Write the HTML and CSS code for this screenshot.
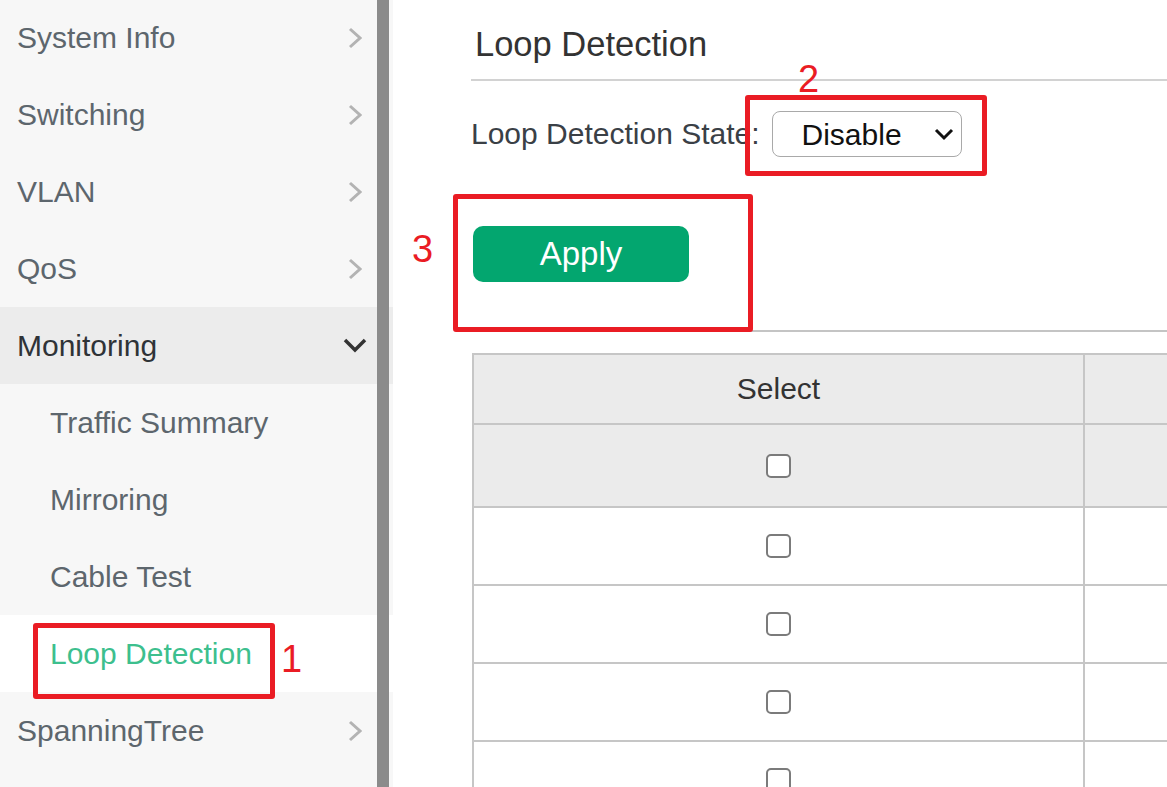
FILE: index.html
```html
<!DOCTYPE html>
<html lang="en">
<head>
    <meta charset="UTF-8">
    <meta name="viewport" content="width=device-width, initial-scale=1.0">
    <title>Loop Detection</title>
    <link rel="stylesheet" href="styles.css">
</head>
<body>
    <aside class="sidebar">
        <ul class="menu">
            <li class="menu-item">System Info
                <span class="menu-icon"><svg width="14" height="22" viewBox="0 0 14 22"><polyline points="2,2 12,11 2,20" /></svg></span>
            </li>
            <li class="menu-item">Switching
                <span class="menu-icon"><svg width="14" height="22" viewBox="0 0 14 22"><polyline points="2,2 12,11 2,20" /></svg></span>
            </li>
            <li class="menu-item">VLAN
                <span class="menu-icon"><svg width="14" height="22" viewBox="0 0 14 22"><polyline points="2,2 12,11 2,20" /></svg></span>
            </li>
            <li class="menu-item">QoS
                <span class="menu-icon"><svg width="14" height="22" viewBox="0 0 14 22"><polyline points="2,2 12,11 2,20" /></svg></span>
            </li>
            <li class="menu-item open">Monitoring
                <span class="menu-icon"><svg width="24" height="15" viewBox="0 0 24 15"><polyline points="2,2 12,12 22,2" /></svg></span>
            </li>
            <li class="menu-item sub">Traffic Summary</li>
            <li class="menu-item sub">Mirroring</li>
            <li class="menu-item sub">Cable Test</li>
            <li class="menu-item sub active">Loop Detection</li>
            <li class="menu-item">SpanningTree
                <span class="menu-icon"><svg width="14" height="22" viewBox="0 0 14 22"><polyline points="2,2 12,11 2,20" /></svg></span>
            </li>
        </ul>
        <div class="scrollbar"></div>
    </aside>

    <main class="content">
        <h1 class="page-title">Loop Detection</h1>

        <div class="form-row">
            <label for="ldState">Loop Detection State:</label>
            <div class="select-wrap">
                <select id="ldState">
                    <option>Disable</option>
                    <option>Enable</option>
                </select>
                <svg class="select-arrow" width="20" height="13" viewBox="0 0 20 13"><polyline points="2,2 10,10 18,2" /></svg>
            </div>
        </div>

        <div class="actions">
            <button class="btn-apply">Apply</button>
        </div>

        <table class="port-table">
            <thead>
                <tr>
                    <th class="col-select">Select</th>
                    <th></th>
                </tr>
            </thead>
            <tbody>
                <tr class="hl"><td class="col-select"><input type="checkbox"></td><td></td></tr>
                <tr><td class="col-select"><input type="checkbox"></td><td></td></tr>
                <tr><td class="col-select"><input type="checkbox"></td><td></td></tr>
                <tr><td class="col-select"><input type="checkbox"></td><td></td></tr>
                <tr><td class="col-select"><input type="checkbox"></td><td></td></tr>
            </tbody>
        </table>
    </main>

    <!-- annotation marks drawn over the screenshot -->
    <div class="mark mark-1"></div>
    <span class="mark-num num-1">1</span>
    <div class="mark mark-2"></div>
    <span class="mark-num num-2">2</span>
    <div class="mark mark-3"></div>
    <span class="mark-num num-3">3</span>
</body>
</html>
```

FILE: styles.css
```css
body {
    margin: 0;
    font-family: "Liberation Sans", Arial, sans-serif;
    display: flex;
    height: 100vh;
    overflow: hidden;
    background: #fff;
    position: relative;
}

/* sidebar */
.sidebar {
    width: 393px;
    flex-shrink: 0;
    background: #f7f7f7;
    position: relative;
}
.menu {
    list-style: none;
    margin: -1px 0 0 0;
    padding: 0;
}
.menu-item {
    height: 77px;
    display: flex;
    align-items: center;
    justify-content: space-between;
    padding: 0 26px 0 17px;
    font-size: 30px;
    color: #5d666d;
}
.menu-item.open {
    background: #ececec;
    color: #2f3337;
}
.menu-item.sub {
    padding-left: 50px;
}
.menu-item.active {
    background: #fff;
    color: #3dbf8e;
}
.menu-icon {
    width: 24px;
    display: flex;
    justify-content: center;
}
.menu-icon svg polyline {
    fill: none;
    stroke: #b3b3b3;
    stroke-width: 3;
}
.menu-item.open .menu-icon svg polyline {
    stroke: #333;
    stroke-width: 3.5;
}
.scrollbar {
    position: absolute;
    top: 0;
    bottom: 0;
    right: 4px;
    width: 12px;
    background: #8b8b8b;
}

/* main panel */
.content {
    flex: 1;
    min-width: 0;
    overflow: hidden;
    padding-left: 78px;
}
.page-title {
    margin: 0;
    padding: 20px 0 11px 4px;
    line-height: 48px;
    font-size: 34.5px;
    font-weight: normal;
    color: #333;
    border-bottom: 2px solid #d2d2d2;
}
.form-row {
    display: flex;
    align-items: center;
    gap: 12px;
    margin-top: 30px;
    height: 46px;
}
.form-row label {
    font-size: 30px;
    color: #3a4046;
}
.select-wrap {
    position: relative;
}
.select-wrap select {
    appearance: none;
    width: 190px;
    height: 46px;
    padding: 0 0 0 29px;
    font-family: inherit;
    font-size: 30px;
    color: #111;
    background: #fff;
    border: 1.5px solid #a9a9a9;
    border-radius: 8px;
}
.select-arrow {
    position: absolute;
    right: 8px;
    top: 17px;
    pointer-events: none;
}
.select-arrow polyline {
    fill: none;
    stroke: #111;
    stroke-width: 3;
}
.actions {
    padding: 69px 0 48px 2px;
    border-bottom: 2px solid #c4c4c4;
}
.btn-apply {
    display: block;
    width: 216px;
    height: 56px;
    border: none;
    border-radius: 10px;
    background: #03a66f;
    color: #fff;
    font-family: inherit;
    font-size: 33px;
    cursor: pointer;
}

/* table */
.port-table {
    margin: 21px 0 0 1px;
    border-collapse: collapse;
    width: 1300px;
    table-layout: fixed;
}
.port-table th,
.port-table td {
    border: 2px solid #c6c6c6;
    padding: 0;
}
.port-table th {
    height: 68px;
    background: #ebebeb;
    font-size: 30px;
    font-weight: normal;
    color: #333;
}
.port-table td {
    height: 76px;
    text-align: center;
}
.port-table tr.hl td {
    height: 81px;
    background: #ebebeb;
}
.col-select {
    width: 609px;
}
.port-table input[type="checkbox"] {
    appearance: none;
    display: block;
    margin: 0 auto;
    width: 25px;
    height: 24px;
    border: 2px solid #7b7b7b;
    border-radius: 5px;
    background: #fff;
}

/* red annotation marks */
.mark {
    position: absolute;
    border: 5px solid #ea1c24;
    border-radius: 3px;
    box-sizing: border-box;
}
.mark-1 { left: 33px; top: 623px; width: 242px; height: 76px; }
.mark-2 { left: 745px; top: 95px; width: 242px; height: 81px; }
.mark-3 { left: 453px; top: 194px; width: 300px; height: 138px; }
.mark-num {
    position: absolute;
    font-size: 38px;
    line-height: 1;
    color: #ea1c24;
}
.num-1 { left: 281px; top: 640px; }
.num-2 { left: 798px; top: 60px; }
.num-3 { left: 412px; top: 230px; }
```
